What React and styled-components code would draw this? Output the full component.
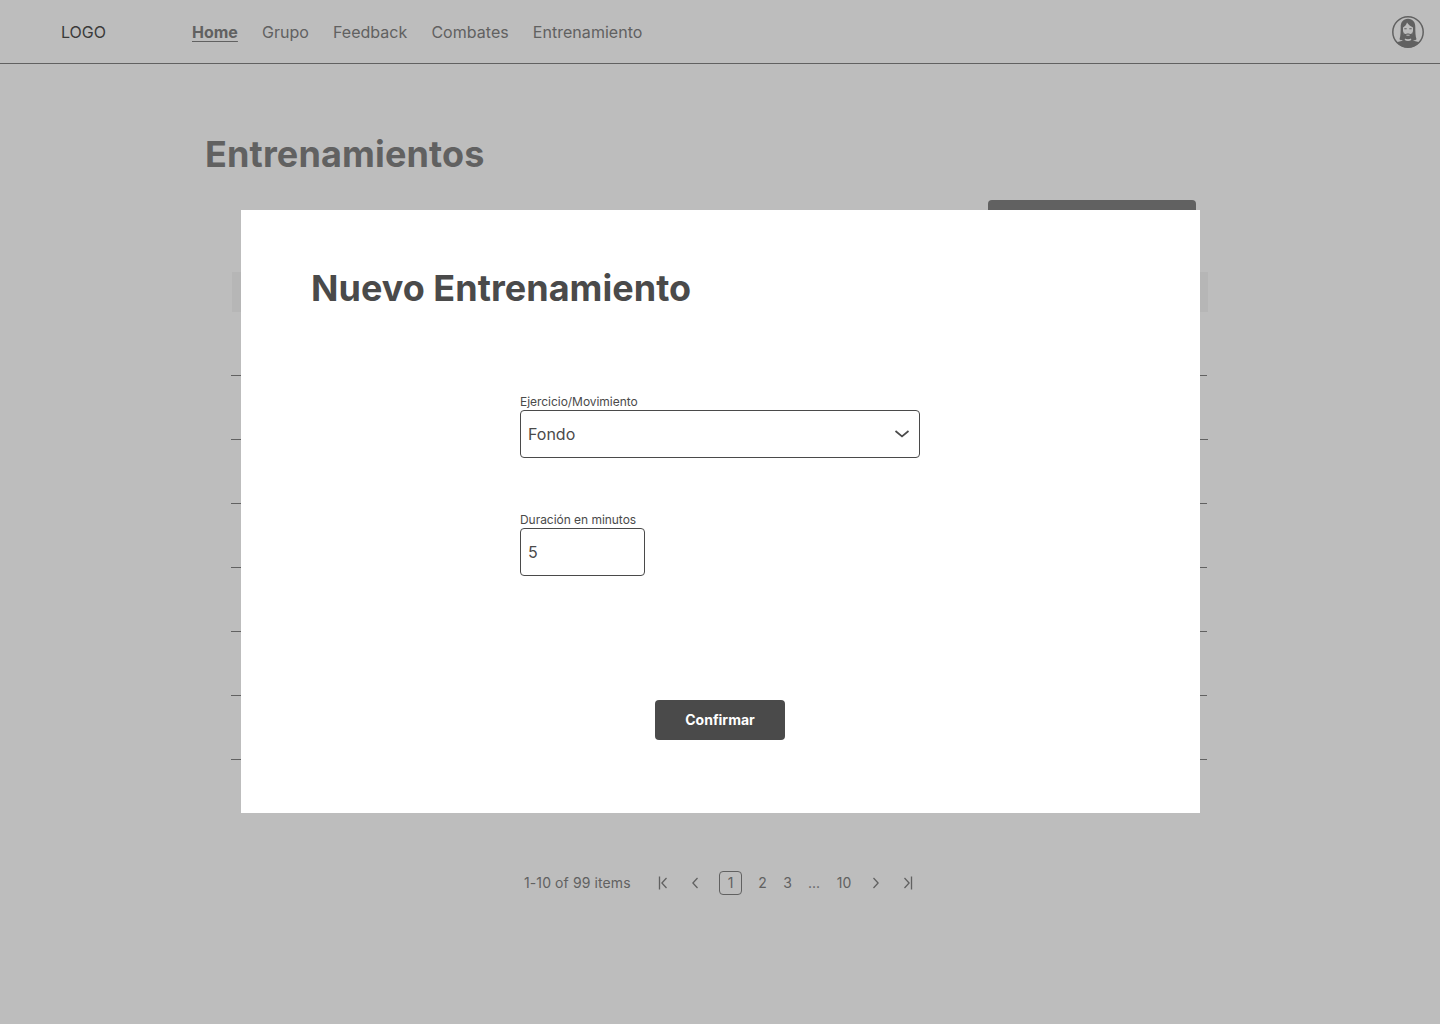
import React from "react";
import styled, { createGlobalStyle } from "styled-components";

const GlobalStyle = createGlobalStyle`
  * { box-sizing: border-box; }
  body {
    margin: 0;
    background: #bdbdbd;
    color: #616161;
    font-family: Inter, "Liberation Sans", sans-serif;
  }
  button, input, select { font: inherit; }
`;

const Page = styled.div`
  position: relative;
  height: 1024px;
  overflow: hidden;
  background: #bdbdbd;
`;

const Header = styled.header`
  display: flex;
  align-items: center;
  height: 64px;
  padding: 0 16px 0 61px;
  border-bottom: 1px solid #616161;
`;

const Logo = styled.div`
  width: 131px;
  font-size: 16px;
  line-height: 24px;
  color: #3a3a3a;
`;

const Nav = styled.nav`
  display: flex;
  flex: 1;
  gap: 24px;
`;

const NavLink = styled.a`
  font-size: 16px;
  line-height: 24px;
  font-weight: ${(p) => (p.$active ? 700 : 400)};
  letter-spacing: ${(p) => (p.$active ? 0 : 0.04)}px;
  color: #616161;
  text-decoration: ${(p) => (p.$active ? "underline" : "none")};
  text-underline-position: from-font;
`;

const Main = styled.main`
  display: flex;
  flex-direction: column;
`;

const PageTitle = styled.h1`
  margin: 66px 0 0 205px;
  font-size: 36px;
  line-height: 48px;
  font-weight: 700;
  letter-spacing: 0.15px;
`;

const NewButton = styled.button`
  align-self: flex-end;
  width: 208px;
  height: 40px;
  margin: 22px 244px 0 0;
  border: 0;
  border-radius: 4px;
  background: #616161;
`;

const Table = styled.div`
  display: flex;
  flex-direction: column;
  width: 977px;
  margin: 32px 0 0 231px;
`;

const TableHead = styled.div`
  height: 40px;
  margin-left: 1px;
  background: #b6b6b6;
`;

const TableRow = styled.div`
  width: ${(p) => (p.$wide ? 977 : 976)}px;
  height: 64px;
  border-bottom: 1px solid #616161;
`;

const Pagination = styled.nav`
  display: flex;
  align-items: center;
  height: 24px;
  margin: 111px 0 0 524px;
  font-size: 14px;
  line-height: 24px;
`;

const Summary = styled.span`
  width: 131px;
  letter-spacing: 0.1px;
`;

const PageItem = styled.span`
  display: flex;
  align-items: center;
  justify-content: center;
  width: ${(p) => p.$width}px;
  height: 24px;
  margin-right: ${(p) => p.$gap || 0}px;
  border: ${(p) => (p.$current ? "1px solid #616161" : "0")};
  border-radius: 4px;
`;

const Modal = styled.section`
  position: absolute;
  top: 210px;
  left: 241px;
  display: flex;
  flex-direction: column;
  width: 959px;
  height: 603px;
  padding: 54px 70px 73px;
  background: #fff;
  color: #4a4a4a;
`;

const ModalTitle = styled.h2`
  margin: 0;
  font-size: 36px;
  line-height: 48px;
  font-weight: 700;
  letter-spacing: 0.03px;
`;

const Form = styled.form`
  display: flex;
  flex: 1;
  flex-direction: column;
  gap: 54px;
  margin: 82px 0 0 209px;
`;

const Field = styled.div`
  display: flex;
  flex-direction: column;
  width: ${(p) => p.$width}px;
`;

const Label = styled.span`
  font-size: 12px;
  line-height: 16px;
  letter-spacing: -0.04px;
  white-space: nowrap;
`;

const Control = styled.div`
  display: flex;
  align-items: center;
  justify-content: space-between;
  height: 48px;
  padding: 0 9px 0 7px;
  border: 1px solid #4a4a4a;
  border-radius: 4px;
  font-size: 16px;
  line-height: 24px;
`;

const ConfirmButton = styled.button`
  width: 130px;
  height: 40px;
  margin-left: 344px;
  padding: 0 0 2px;
  border: 0;
  border-radius: 4px;
  background: #4a4a4a;
  color: #fff;
  font-size: 14px;
  font-weight: 700;
`;

const Avatar = () => (
  <svg width="32" height="32" viewBox="0 0 32 32">
    <circle cx="16" cy="16" r="15.2" fill="none" stroke="#616161" strokeWidth="1.5" />
    <path
      fill="#616161"
      d="M16 2.800c-5 0-7.300 3.600-7.300 8.200 0 5-.1 9-1.200 12.300.9 1 2.500 1.300 4 1.100L4.500 26.200C7.200 29.600 11.300 31.500 16 31.500s8.800-1.900 11.500-5.300l-7-1.800c1.500.2 3.100-.1 4-1.100-1.100-3.300-1.200-7.300-1.200-12.300 0-4.600-2.300-8.200-7.300-8.200z"
    />
    <path
      fill="#bdbdbd"
      d="M15 6.500c-.5 2-2.200 4-4 5v4c0 2.500 1.800 6 5 6s5-3.500 5-6v-4c-2.200-1-4.700-3-6-5zM13 22.500c2 1 4 1 6 0l.3 1.500c-1.800 1.300-4.800 1.300-6.600 0z"
    />
    <path
      fill="#616161"
      d="M11 15c.8 2.600 1.800 3.300 3 2.900 1.200-.5 2.800-.5 4 0 1.200.4 2.200-.3 3-2.900 0 4.500-2 8-5 8s-5-3.500-5-8zM12.300 12.200h2.400v1h-2.400zM17.300 12.200h2.400v1h-2.400z"
    />
    <path d="M14.400 19.200h3.200" stroke="#bdbdbd" strokeWidth="1" />
  </svg>
);

const Arrow = ({ flip, bar }) => (
  <svg
    width="16"
    height="16"
    viewBox="0 0 16 16"
    fill="none"
    stroke="#616161"
    strokeWidth="1.3"
    transform={flip ? "scale(-1 1)" : undefined}
  >
    <path d={bar ? "M11.500 3L6.900 8l4.600 5" : "M10.500 3L5.900 8l4.600 5"} />
    {bar && <path d="M4.500 1.500v13" />}
  </svg>
);

const links = ["Home", "Grupo", "Feedback", "Combates", "Entrenamiento"];

export default function App() {
  return (
    <>
      <GlobalStyle />
      <Page>
        <Header>
          <Logo>LOGO</Logo>
          <Nav>
            {links.map((name, i) => (
              <NavLink key={name} $active={i === 0}>
                {name}
              </NavLink>
            ))}
          </Nav>
          <Avatar />
        </Header>
        <Main>
          <PageTitle>Entrenamientos</PageTitle>
          <NewButton />
          <Table>
            <TableHead />
            {[0, 1, 2, 3, 4, 5, 6].map((n) => (
              <TableRow key={n} $wide={n === 1} />
            ))}
          </Table>
          <Pagination>
            <Summary>1-10 of 99 items</Summary>
            <PageItem $width={16} $gap={16}><Arrow bar /></PageItem>
            <PageItem $width={16} $gap={16}><Arrow /></PageItem>
            <PageItem $width={23} $gap={16} $current>1</PageItem>
            <PageItem $width={9} $gap={16}>2</PageItem>
            <PageItem $width={9} $gap={16}>3</PageItem>
            <PageItem $width={12} $gap={16}>...</PageItem>
            <PageItem $width={16} $gap={16}>10</PageItem>
            <PageItem $width={16} $gap={16}><Arrow flip /></PageItem>
            <PageItem $width={16}><Arrow flip bar /></PageItem>
          </Pagination>
        </Main>
        <Modal>
          <ModalTitle>Nuevo Entrenamiento</ModalTitle>
          <Form>
            <Field $width={400}>
              <Label>Ejercicio/Movimiento</Label>
              <Control>
                Fondo
                <svg width="16" height="16" viewBox="0 0 16 16" fill="none" stroke="#4a4a4a" strokeWidth="1.7">
                  <path d="M1.500 5L8 10.500 14.500 5" />
                </svg>
              </Control>
            </Field>
            <Field $width={125}>
              <Label>Duración en minutos</Label>
              <Control>5</Control>
            </Field>
          </Form>
          <ConfirmButton>Confirmar</ConfirmButton>
        </Modal>
      </Page>
    </>
  );
}
